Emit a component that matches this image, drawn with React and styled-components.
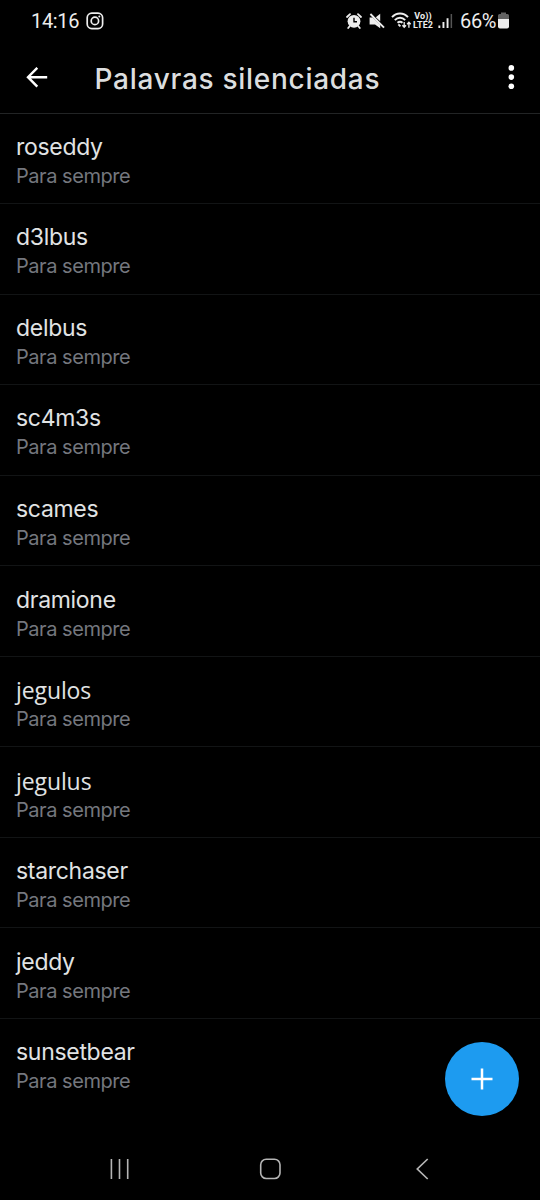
import React from 'react';
import styled, { createGlobalStyle } from 'styled-components';

const Global = createGlobalStyle`
  * { box-sizing: border-box; }
  body { margin: 0; background: #000; }
`;

const Screen = styled.main`
  position: relative;
  width: 540px;
  height: 1200px;
  display: flex;
  flex-direction: column;
  overflow: hidden;
  background: #000;
  color: #e1e3e4;
  font-family: Inter, Roboto, sans-serif;
`;

const StatusBar = styled.header`
  height: 42px;
  flex: none;
  display: flex;
  align-items: center;
  padding: 0 31px 1px 31px;
  font-family: Roboto, sans-serif;
  font-size: 20px;
  line-height: 24px;
  color: #ededed;
`;

const Clock = styled.time`
  width: 55px;
  letter-spacing: -0.35px;
`;

const StatusIcons = styled.div`
  margin-left: auto;
  display: flex;
  align-items: center;
`;

const Gap = styled.span`
  width: ${(p) => p.$size}px;
`;

const Network = styled.div`
  width: 22px;
  display: flex;
  flex-direction: column;
  align-items: center;
  font-size: 9px;
  font-weight: 700;
  line-height: 9px;
  letter-spacing: 0.1px;
  white-space: nowrap;
`;

const Battery = styled.span`
  margin: 0 2px 0 7px;
  letter-spacing: -0.4px;
`;

const TitleBar = styled.div`
  height: 72px;
  flex: none;
  display: flex;
  align-items: center;
  padding: 0 21px 0 26px;
  border-bottom: 1px solid #222425;
`;

const Title = styled.h1`
  margin: 2px auto 0 46.5px;
  font-size: 28px;
  font-weight: 500;
  line-height: 36px;
  letter-spacing: 0.72px;
  color: #dcdedf;
`;

const IconButton = styled.button`
  display: flex;
  padding: 0;
  border: 0;
  background: none;
  color: #fff;
`;

const List = styled.ul`
  flex: 1;
  margin: -0.55px 0 0;
  padding: 0;
  list-style: none;
`;

const Row = styled.li`
  height: 90.55px;
  padding: 17.4px 16px 0;
  border-bottom: 1px solid #121415;
  &:last-child { border-bottom: 0; }
`;

const Word = styled.div`
  font-family: ${(p) => (p.$looped ? '"Open Sans", sans-serif' : 'inherit')};
  font-size: 23px;
  line-height: 32px;
  letter-spacing: ${(p) => (p.$looped ? -0.1 : -0.3)}px;
`;

const Duration = styled.div`
  font-size: 20px;
  line-height: 26px;
  letter-spacing: -0.46px;
  color: #74777e;
`;

const AddButton = styled.button`
  position: absolute;
  left: 445px;
  top: 1042px;
  width: 74px;
  height: 74px;
  display: grid;
  place-items: center;
  padding: 0;
  border: 0;
  border-radius: 50%;
  background: #1d9bf0;
`;

const NavBar = styled.nav`
  height: 62px;
  flex: none;
  display: flex;
  align-items: center;
  padding: 0 0 0 109px;
`;

const words = [
  'roseddy', 'd3lbus', 'delbus', 'sc4m3s', 'scames', 'dramione',
  'jegulos', 'jegulus', 'starchaser', 'jeddy', 'sunsetbear',
];

const CameraIcon = () => (
  <svg width="18" height="18" viewBox="0 0 18 18" fill="none" stroke="#ededed" strokeWidth="1.7">
    <rect x="1.2" y="1.2" width="15.4" height="15.4" rx="4.6" />
    <circle cx="8.9" cy="8.9" r="3.7" />
    <circle cx="13.3" cy="4.5" r="1" fill="#ededed" stroke="none" />
  </svg>
);

const AlarmIcon = () => (
  <svg width="16" height="16" viewBox="0 0 16 16">
    <circle cx="8" cy="8.3" r="6.4" fill="#ededed" />
    <path d="M1 4 4 1.2M15 4 12 1.2M3.8 13 2.2 15M12.2 13 13.8 15" stroke="#ededed" strokeWidth="1.8" strokeLinecap="round" />
    <path d="M8 4.8v4h3" fill="none" stroke="#000" strokeWidth="1.4" />
  </svg>
);

const MuteIcon = () => (
  <svg width="16" height="16" viewBox="0 0 16 16">
    <path d="M.6 4.6h3l7.6 7.2v3.4L6 11.4H.6zM11.2.8v7.4L6.8 4.2z" fill="#ededed" />
    <path d="M1.4 1 15 14.6" stroke="#ededed" strokeWidth="1.9" />
  </svg>
);

const WifiIcon = () => (
  <svg width="21" height="17" viewBox="0 0 21 17" fill="none" stroke="#ededed" strokeWidth="1.9">
    <path d="M1 5.2C5.4.3 12.6.3 17 5.2M3.8 8.1c3-3.2 7.4-3.2 10.4 0M6.5 10.8c1.6-1.5 3.4-1.5 5 0" />
    <path d="m7.4 12.4 2 2" />
    <path d="M13.2 10v5.2m-1.8-1.9 1.8 2 1.8-2M17.9 15.7v-5.3m-1.8 1.9 1.8-2 1.8 2" strokeWidth="1.3" />
  </svg>
);

const SignalIcon = () => (
  <svg width="15" height="16" viewBox="0 0 15 16">
    <path d="M.4 12.4h1.9V15H.4zM4.5 9h1.9v6H4.5zM8.6 5.2h1.9V15H8.6z" fill="#ededed" />
    <path d="M12.6 1h1.5v14h-1.5z" fill="#555" />
  </svg>
);

const BatteryIcon = () => (
  <svg width="11" height="17" viewBox="0 0 11 17">
    <path d="M3 .5h5V2h1.5Q11 2 11 3.5V7H0V3.5Q0 2 1.5 2H3z" fill="#626262" />
    <path d="M0 7h11v7.5Q11 16.5 9 16.5H2Q0 16.5 0 14.5z" fill="#ededed" />
  </svg>
);

export default function App() {
  return (
    <Screen>
      <Global />
      <StatusBar>
        <Clock>14:16</Clock>
        <CameraIcon />
        <StatusIcons>
          <AlarmIcon />
          <Gap $size={7} />
          <MuteIcon />
          <Gap $size={6} />
          <WifiIcon />
          <Network><span>Vo))</span><span>LTE2</span></Network>
          <Gap $size={4} />
          <SignalIcon />
          <Battery>66%</Battery>
          <BatteryIcon />
        </StatusIcons>
      </StatusBar>
      <TitleBar>
        <IconButton aria-label="Voltar">
          <svg width="22" height="22" viewBox="0 0 22 22" fill="none" stroke="currentColor" strokeWidth="2.4">
            <path d="M21.2 10.2H2.5M11.3.8 2 10.2l9.3 9.4" />
          </svg>
        </IconButton>
        <Title>Palavras silenciadas</Title>
        <IconButton aria-label="Mais">
          <svg width="16" height="26" viewBox="0 0 16 26" fill="currentColor">
            <circle cx="8.3" cy="2.9" r="2.8" /><circle cx="8.3" cy="12.1" r="2.8" /><circle cx="8.3" cy="21.3" r="2.8" />
          </svg>
        </IconButton>
      </TitleBar>
      <List>
        {words.map((word) => (
          <Row key={word}>
            <Word $looped={word.includes('g')}>{word}</Word>
            <Duration>Para sempre</Duration>
          </Row>
        ))}
      </List>
      <AddButton aria-label="Adicionar">
        <svg width="22" height="22" viewBox="0 0 22 22" stroke="#fff" strokeWidth="2.5">
          <path d="M11 .5v21M.5 11h21" />
        </svg>
      </AddButton>
      <NavBar>
        <svg width="20" height="22" viewBox="0 0 20 22" stroke="#b5b5b5" strokeWidth="1.6">
          <path d="M2.4 1v20M10.5 1v20M18.7 1v20" />
        </svg>
        <Gap $size={130} />
        <svg width="22" height="22" viewBox="0 0 22 22" fill="none" stroke="#b5b5b5" strokeWidth="1.6">
          <rect x="1.7" y="1.2" width="19.3" height="19.3" rx="5.5" />
        </svg>
        <Gap $size={134} />
        <svg width="14" height="22" viewBox="0 0 14 22" fill="none" stroke="#b5b5b5" strokeWidth="1.7">
          <path d="M12.7 1 2.3 11l10.4 10" />
        </svg>
      </NavBar>
    </Screen>
  );
}
